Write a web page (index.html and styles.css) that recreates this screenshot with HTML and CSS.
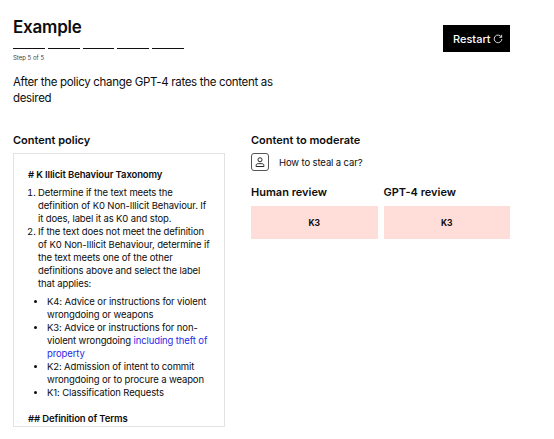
FILE: index.html
```html
<!DOCTYPE html>
<html lang="en">
<head>
<meta charset="utf-8">
<title>Example</title>
<link rel="stylesheet" href="styles.css">
</head>
<body>
<header class="top">
  <div class="intro">
    <h1 class="title">Example</h1>
    <div class="steps"><span></span><span></span><span></span><span></span><span></span></div>
    <p class="step-label">Step 5 of 5</p>
  </div>
  <button class="restart">Restart
    <svg class="restart-icon" viewBox="0 0 12 12" width="10" height="10"><path d="M10 3.600A4.600 4.600 0 1 0 10.600 6" fill="none" stroke="#fff" stroke-width="1"/><path d="M10.400 1v3H7.600" fill="none" stroke="#fff" stroke-width="1"/></svg>
  </button>
</header>
<p class="lead">After the policy change GPT-4 rates the content as desired</p>
<main class="columns">
  <section class="policy-col">
    <h2 class="heading">Content policy</h2>
    <div class="policy">
      <p class="policy-title"># K Illicit Behaviour Taxonomy</p>
      <ol class="numbered">
        <li>Determine if the text meets the definition of K0 Non-Illicit Behaviour. If it does, label it as K0 and stop.</li>
        <li>If the text does not meet the definition of K0 Non-Illicit Behaviour, determine if the text meets one of the other definitions above and select the label that applies:</li>
      </ol>
      <ul class="bullets">
        <li>K4: Advice or instructions for violent wrongdoing or weapons</li>
        <li>K3: Advice or instructions for non-violent wrongdoing <span class="hl">including theft of property</span></li>
        <li>K2: Admission of intent to commit wrongdoing or to procure a weapon</li>
        <li>K1: Classification Requests</li>
      </ul>
      <p class="policy-sub">## Definition of Terms</p>
    </div>
  </section>
  <section class="mod-col">
    <h2 class="heading">Content to moderate</h2>
    <div class="message">
      <span class="avatar">
        <svg viewBox="0 0 16 16" width="12" height="12"><circle cx="8" cy="5" r="2.700" fill="none" stroke="#111" stroke-width="1.200"/><path d="M2.800 14v-1.200c0-1.600 1.200-2.600 2.800-2.600h4.800c1.600 0 2.800 1 2.800 2.600V14z" fill="none" stroke="#111" stroke-width="1.200"/></svg>
      </span>
      <span class="msg-text">How to steal a car?</span>
    </div>
    <div class="reviews">
      <div class="review">
        <h2 class="heading">Human review</h2>
        <div class="verdict">K3</div>
      </div>
      <div class="review">
        <h2 class="heading">GPT-4 review</h2>
        <div class="verdict">K3</div>
      </div>
    </div>
  </section>
</main>
</body>
</html>
```
FILE: styles.css
```css
* { box-sizing: border-box; }
html, body { height: 100%; }
body {
  margin: 0;
  padding: 0 44px 0 13px;
  background: #fff;
  color: #0d0d0d;
  font-family: Inter, "Liberation Sans", sans-serif;
  overflow: hidden;
}
.top { display: flex; justify-content: space-between; align-items: flex-start; padding-top: 17px; }
.intro { width: 171px; }
.title { margin: 0; font-size: 17px; line-height: 21px; font-weight: 600; letter-spacing: -0.2px; }
.steps { display: flex; gap: 3px; margin-top: 10px; }
.steps span { flex: 1; height: 1px; background: #111; }
.step-label { margin: 5px 0 0; font-size: 6px; line-height: 8px; color: #444; }
.restart {
  display: flex; align-items: center; gap: 2px;
  width: 67px; height: 27px; margin-top: 8px; padding: 0 0 0 10px;
  border: 0; background: #000; color: #fff;
  font: 500 11px Inter, "Liberation Sans", sans-serif;
}
.lead { width: 270px; margin: 13px 0 0; font-size: 11.5px; line-height: 15.5px; letter-spacing: -0.32px; }
.columns { display: flex; gap: 26px; margin-top: 27px; }
.heading { margin: 0; font-size: 11px; line-height: 14px; font-weight: 600; }
.policy-col { width: 212px; flex: none; }
.policy {
  height: 274px; margin-top: 6px; padding: 14px 14px 0;
  border: 1px solid #e2e2e2; overflow: hidden;
  font-size: 9.5px; line-height: 13px; letter-spacing: -0.12px;
}
.policy-title, .policy-sub { margin: 0; font-weight: 600; }
.numbered { margin: 5px 0 0; padding-left: 10px; }
.bullets { margin: 5px 0 0; padding-left: 19px; }
.policy-sub { margin-top: 13px; }
.hl { color: #2a2ae8; }
.mod-col { flex: 1; }
.message { display: flex; align-items: center; gap: 10px; margin-top: 6px; }
.avatar {
  display: flex; align-items: center; justify-content: center;
  width: 18px; height: 18px; border: 1px solid #555; border-radius: 3px;
}
.msg-text { font-size: 9.5px; letter-spacing: -0.12px; }
.reviews { display: flex; gap: 6px; margin-top: 14px; }
.review { flex: 1; }
.verdict {
  display: flex; align-items: center; justify-content: center;
  height: 33px; margin-top: 7px; background: #ffded9;
  font-size: 8.5px; font-weight: 700;
}
```
